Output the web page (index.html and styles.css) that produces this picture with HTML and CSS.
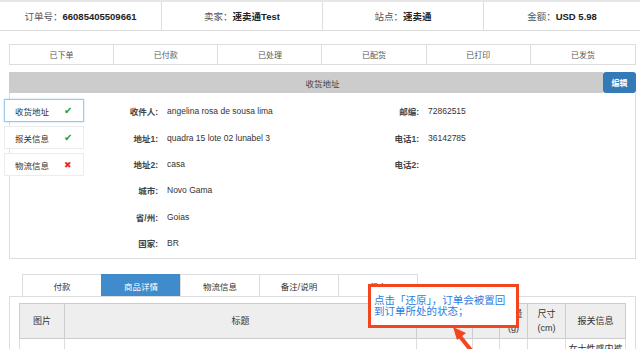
FILE: index.html
```html
<!DOCTYPE html>
<html lang="zh-CN">
<head>
    <meta charset="UTF-8">
    <title>订单详情</title>
    <link rel="stylesheet" href="styles.css">
</head>
<body>
    <div class="order-bar">
        <div class="order-cell">订单号：<b>66085405509661</b></div>
        <div class="order-cell">卖家：<b>速卖通Test</b></div>
        <div class="order-cell">站点：<b>速卖通</b></div>
        <div class="order-cell">金额：<b>USD 5.98</b></div>
    </div>

    <div class="status-bar">
        <div class="status-step">已下单</div>
        <div class="status-step">已付款</div>
        <div class="status-step">已处理</div>
        <div class="status-step">已配货</div>
        <div class="status-step">已打印</div>
        <div class="status-step">已发货</div>
    </div>

    <div class="addr-panel">
        <div class="addr-head">
            <div class="addr-title">收货地址</div>
            <button class="edit-btn">编辑</button>
        </div>
        <div class="addr-body">
            <div class="side-nav">
                <div class="side-item active">收货地址 <span class="ok">&#10004;</span></div>
                <div class="side-item">报关信息 <span class="ok">&#10004;</span></div>
                <div class="side-item">物流信息 <span class="bad">&#10006;</span></div>
            </div>
            <div class="addr-grid">
                <div class="lbl">收件人:</div><div class="val">angelina rosa de sousa lima</div>
                <div class="lbl">邮编:</div><div class="val">72862515</div>
                <div class="lbl">地址1:</div><div class="val">quadra 15 lote 02 lunabel 3</div>
                <div class="lbl">电话1:</div><div class="val">36142785</div>
                <div class="lbl">地址2:</div><div class="val">casa</div>
                <div class="lbl">电话2:</div><div class="val"></div>
                <div class="lbl">城市:</div><div class="val">Novo Gama</div>
                <div class="lbl"></div><div class="val"></div>
                <div class="lbl">省/州:</div><div class="val">Goias</div>
                <div class="lbl"></div><div class="val"></div>
                <div class="lbl">国家:</div><div class="val">BR</div>
                <div class="lbl"></div><div class="val"></div>
            </div>
        </div>
    </div>

    <div class="tabs">
        <div class="tab">付款</div>
        <div class="tab active">商品详情</div>
        <div class="tab">物流信息</div>
        <div class="tab">备注/说明</div>
        <div class="tab">留言</div>
    </div>
    <div class="tab-panel">
        <table class="goods">
            <thead>
                <tr>
                    <th class="c-img">图片</th>
                    <th class="c-title">标题</th>
                    <th class="c-a">数量</th>
                    <th class="c-b">单价</th>
                    <th class="c-w">重量<br>(g)</th>
                    <th class="c-s">尺寸<br>(cm)</th>
                    <th class="c-d">报关信息</th>
                </tr>
            </thead>
            <tbody>
                <tr>
                    <td><div class="thumb"></div></td>
                    <td></td>
                    <td></td>
                    <td></td>
                    <td></td>
                    <td></td>
                    <td>女士性感内裤</td>
                </tr>
            </tbody>
        </table>
    </div>

    <div class="callout">点击「还原」，订单会被置回到订单所处的状态；</div>
    <svg class="arrow" width="40" height="40" viewBox="0 0 40 40">
        <line x1="26" y1="32" x2="10" y2="12" stroke="#f4461e" stroke-width="4"/>
        <polygon points="5,5 18,11 9,18" fill="#f4461e"/>
    </svg>
</body>
</html>
```

FILE: styles.css
```css
* {
    box-sizing: border-box;
}
body {
    margin: 0;
    font-family: "Liberation Sans", "Noto Sans CJK SC", Arial, sans-serif;
    font-size: 8.5px;
    color: #333;
    background: #fff;
    height: 349px;
    overflow: hidden;
}
.order-bar {
    display: grid;
    grid-template-columns: 162px 161px 161px 1fr;
    height: 31px;
    border-top: 2px solid #e6e6e6;
    border-bottom: 1px solid #ddd;
}
.order-cell {
    display: flex;
    align-items: center;
    justify-content: center;
    font-size: 9.5px;
    color: #555;
    border-right: 1px solid #ddd;
}
.order-cell:last-child {
    border-right: none;
}
.order-cell b {
    color: #222;
}
.status-bar {
    display: grid;
    grid-template-columns: repeat(6, 1fr);
    margin: 13px 4px 0 9px;
    border: 1px solid #ddd;
    height: 21px;
}
.status-step {
    display: flex;
    align-items: center;
    justify-content: center;
    font-size: 8px;
    color: #555;
    border-right: 1px solid #ddd;
}
.status-step:last-child {
    border-right: none;
}
.addr-panel {
    margin: 7px 4px 0 9px;
}
.addr-head {
    display: flex;
    align-items: stretch;
    height: 21px;
}
.addr-title {
    flex: 1;
    background: #cccccc;
    display: flex;
    align-items: center;
    justify-content: center;
    padding-left: 33px;
    color: #444;
}
.edit-btn {
    width: 33px;
    border: none;
    border-radius: 3px;
    background: #337ab7;
    color: #fff;
    font-family: inherit;
    font-size: 8px;
    font-weight: bold;
    padding: 0;
}
.addr-body {
    display: flex;
    border: 1px solid #ddd;
    border-top: none;
    padding: 5px 0 2px 0;
}
.side-nav {
    display: flex;
    flex-direction: column;
    gap: 4px;
    width: 80px;
    flex-shrink: 0;
    margin: 1px 0 0 -6px;
}
.side-item {
    display: flex;
    justify-content: space-between;
    align-items: center;
    height: 23px;
    padding: 0 11px 0 10px;
    white-space: nowrap;
    background: #fff;
    border: 1px solid #ececec;
    color: #333;
}
.side-item.active {
    border-color: #9cc8ee;
    box-shadow: 0 0 2px #b5d6f3;
}
.ok {
    color: #2a9a2a;
    font-size: 10px;
}
.bad {
    color: #e82a2a;
    font-size: 9px;
}
.addr-grid {
    flex: 1;
    display: grid;
    grid-template-columns: 74px 193px 68px 1fr;
    grid-auto-rows: 26.4px;
}
.lbl {
    display: flex;
    align-items: center;
    justify-content: flex-end;
    font-weight: bold;
    color: #444;
}
.val {
    display: flex;
    align-items: center;
    padding-left: 9px;
}
.addr-grid .val:nth-child(4n) {
    padding-left: 9px;
}
.tabs {
    display: flex;
    margin: 15px 0 0 22px;
}
.tab {
    width: 80px;
    height: 22px;
    display: flex;
    align-items: center;
    justify-content: center;
    border: 1px solid #ddd;
    border-bottom: none;
    margin-right: -1px;
    color: #333;
    background: #fff;
}
.tab.active {
    background: #3f8bcb;
    border-color: #3f8bcb;
    color: #fff;
}
.tab-panel {
    margin: 0 4px 0 9px;
    border: 1px solid #ddd;
    padding: 6px 9px 20px 9px;
}
.goods {
    width: 100%;
    border-collapse: collapse;
    table-layout: fixed;
    font-size: 9px;
}
.goods th {
    background: #eee;
    border: 1px solid #ccc;
    height: 35px;
    font-weight: normal;
    color: #333;
    padding: 0;
    line-height: 14px;
}
.goods td {
    border: 1px solid #ddd;
    height: 30px;
    text-align: center;
    vertical-align: top;
    padding: 3px 2px;
}
.c-img { width: 45px; }
.c-a { width: 56px; }
.c-b { width: 27px; }
.c-w { width: 28px; }
.c-s { width: 38px; }
.c-d { width: 60px; }
.thumb {
    width: 44px;
    height: 20px;
    border-top: 1px solid #ddd;
    margin: 8px 0 0 -2px;
}
.callout {
    position: absolute;
    left: 368px;
    top: 284px;
    width: 151px;
    height: 44px;
    padding: 8px 4px 0 3px;
    border: 3px solid #f4461e;
    background: #fff;
    color: #2b7de0;
    font-size: 10.5px;
    line-height: 11px;
}
.arrow {
    position: absolute;
    left: 448px;
    top: 322px;
}
```
